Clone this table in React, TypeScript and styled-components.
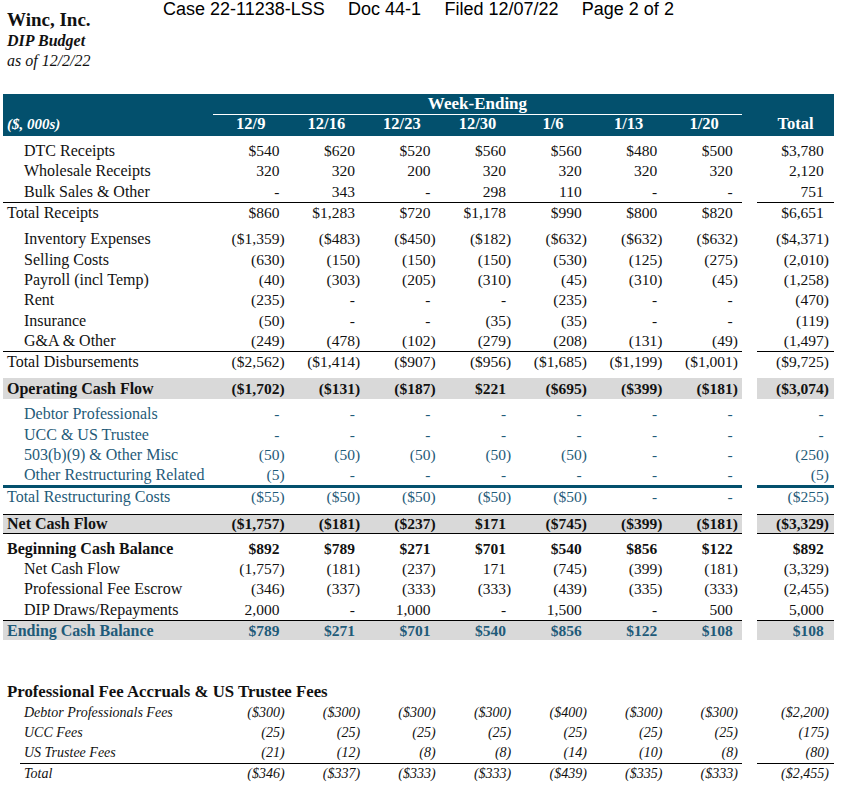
import React from 'react';
import styled, { createGlobalStyle, css } from 'styled-components';

const TEAL = '#03506d';
const TEXT_TEAL = '#1f5b79';
const GRAY = '#d9d9d9';
const COLS = '210px repeat(7, 75.57px) 15px 77px';

const GlobalStyle = createGlobalStyle`
  html, body { margin: 0; padding: 0; background: #fff; }
  body { font-family: "Liberation Serif", "Times New Roman", serif; color: #111; }
`;

const Page = styled.div`
  position: relative;
  width: 850px;
  height: 799px;
  overflow: hidden;
`;

const Stamp = styled.div`
  position: absolute;
  top: -1px;
  left: 163px;
  display: flex;
  gap: 23.3px;
  font-family: "Liberation Sans", Arial, sans-serif;
  font-size: 18px;
  line-height: 20px;
  color: #000;
  white-space: nowrap;
`;

const TitleBlock = styled.div`
  padding: 9px 0 0 7px;
`;
const Company = styled.div`
  font-weight: 700;
  font-size: 19px;
  line-height: 22px;
`;
const Subtitle = styled.div`
  font-weight: 700;
  font-style: italic;
  font-size: 16px;
  line-height: 20px;
`;
const AsOf = styled.div`
  font-style: italic;
  font-size: 16px;
  line-height: 20px;
`;

const Table = styled.div`
  margin: 23px 0 0 3px;
  width: 831px;
`;

const HeaderBand = styled.div`
  background: ${TEAL};
  color: #fff;
  height: 42px;
  display: grid;
  grid-template-columns: ${COLS};
  grid-template-rows: 21px 21px;
  font-weight: 700;
`;

const WeekEnding = styled.div`
  grid-column: 2 / 9;
  grid-row: 1;
  text-align: center;
  border-bottom: 1px solid #fff;
  font-size: 17px;
  line-height: 20px;
`;

const UnitsLabel = styled.div`
  grid-column: 1;
  grid-row: 2;
  padding-left: 4px;
  font-style: italic;
  font-size: 15px;
  line-height: 18px;
`;

const ColHead = styled.div<{ $col: number }>`
  grid-column: ${(p) => p.$col};
  grid-row: 2;
  text-align: center;
  font-size: 16.5px;
  line-height: 18px;
`;

type Tone = 'plain' | 'teal';

const Label = styled.div<{ $indent?: boolean; $bold?: boolean; $italic?: boolean; $tone?: Tone; $inset?: boolean }>`
  display: flex;
  align-items: center;
  box-sizing: border-box;
  white-space: nowrap;
  padding-left: ${(p) => (p.$inset ? '4px' : p.$indent ? '21px' : '4px')};
  margin-left: ${(p) => (p.$inset ? '17px' : '0')};
  font-size: ${(p) => (p.$italic ? '14px' : '16px')};
  font-weight: ${(p) => (p.$bold ? 700 : 400)};
  font-style: ${(p) => (p.$italic ? 'italic' : 'normal')};
  color: ${(p) => (p.$tone === 'teal' ? TEXT_TEAL : '#111')};
`;

const NumCell = styled.div<{ $bold?: boolean; $italic?: boolean; $tone?: Tone; $total?: boolean }>`
  display: flex;
  align-items: center;
  justify-content: flex-end;
  box-sizing: border-box;
  white-space: nowrap;
  padding-right: ${(p) => (p.$total ? '5px' : '4px')};
  font-size: ${(p) => (p.$italic ? '14px' : '15.5px')};
  font-weight: ${(p) => (p.$bold ? 700 : 400)};
  font-style: ${(p) => (p.$italic ? 'italic' : 'normal')};
  color: ${(p) => (p.$tone === 'teal' ? TEXT_TEAL : '#111')};
`;

const Ghost = styled.span`
  visibility: hidden;
`;

const Gap = styled.div``;

type LineKind = 'thin' | 'thick';

const Row = styled.div<{ $mt?: number; $h?: number; $band?: boolean; $line?: LineKind; $lineBottom?: boolean }>`
  display: grid;
  grid-template-columns: ${COLS};
  height: ${(p) => p.$h ?? 20.3}px;
  margin-top: ${(p) => p.$mt ?? 0}px;

  & > ${Label}, & > ${NumCell} {
    ${(p) => p.$band && css`background: ${GRAY};`}
    ${(p) => p.$line === 'thin' && css`border-top: 1px solid #000;`}
    ${(p) => p.$line === 'thick' && css`border-top: 3px solid ${TEAL};`}
    ${(p) => p.$lineBottom && css`border-bottom: 1px solid #000;`}
  }
`;

const SectionTitle = styled.div<{ $mt: number }>`
  margin-top: ${(p) => p.$mt}px;
  padding-left: 4px;
  height: 20.3px;
  display: flex;
  align-items: center;
  font-weight: 700;
  font-size: 16.8px;
  white-space: nowrap;
`;

type RowDef = {
  label: string;
  values: string[];
  total: string;
  indent?: boolean;
  bold?: boolean;
  italic?: boolean;
  tone?: Tone;
  band?: boolean;
  line?: LineKind;
  lineBottom?: boolean;
  mt?: number;
  h?: number;
  inset?: boolean;
};

const Value: React.FC<{ v: string }> = ({ v }) =>
  v.endsWith(')') ? <>{v}</> : (
    <>
      {v}
      <Ghost>)</Ghost>
    </>
  );

const DataRow: React.FC<{ r: RowDef }> = ({ r }) => (
  <Row $mt={r.mt} $h={r.h} $band={r.band} $line={r.line} $lineBottom={r.lineBottom}>
    <Label $indent={r.indent} $bold={r.bold} $italic={r.italic} $tone={r.tone} $inset={r.inset}>
      {r.label}
    </Label>
    {r.values.map((v, i) => (
      <NumCell key={i} $bold={r.bold} $italic={r.italic} $tone={r.tone}>
        <Value v={v} />
      </NumCell>
    ))}
    <Gap />
    <NumCell $total $bold={r.bold} $italic={r.italic} $tone={r.tone}>
      <Value v={r.total} />
    </NumCell>
  </Row>
);

const WEEKS = ['12/9', '12/16', '12/23', '12/30', '1/6', '1/13', '1/20'];

const ROWS: RowDef[] = [
  { label: 'DTC Receipts', indent: true, mt: 5, values: ['$540', '$620', '$520', '$560', '$560', '$480', '$500'], total: '$3,780' },
  { label: 'Wholesale Receipts', indent: true, values: ['320', '320', '200', '320', '320', '320', '320'], total: '2,120' },
  { label: 'Bulk Sales & Other', indent: true, values: ['-', '343', '-', '298', '110', '-', '-'], total: '751' },
  { label: 'Total Receipts', line: 'thin', values: ['$860', '$1,283', '$720', '$1,178', '$990', '$800', '$820'], total: '$6,651' },

  { label: 'Inventory Expenses', indent: true, mt: 7, values: ['($1,359)', '($483)', '($450)', '($182)', '($632)', '($632)', '($632)'], total: '($4,371)' },
  { label: 'Selling Costs', indent: true, values: ['(630)', '(150)', '(150)', '(150)', '(530)', '(125)', '(275)'], total: '(2,010)' },
  { label: 'Payroll (incl Temp)', indent: true, values: ['(40)', '(303)', '(205)', '(310)', '(45)', '(310)', '(45)'], total: '(1,258)' },
  { label: 'Rent', indent: true, values: ['(235)', '-', '-', '-', '(235)', '-', '-'], total: '(470)' },
  { label: 'Insurance', indent: true, values: ['(50)', '-', '-', '(35)', '(35)', '-', '-'], total: '(119)' },
  { label: 'G&A & Other', indent: true, values: ['(249)', '(478)', '(102)', '(279)', '(208)', '(131)', '(49)'], total: '(1,497)' },
  { label: 'Total Disbursements', line: 'thin', values: ['($2,562)', '($1,414)', '($907)', '($956)', '($1,685)', '($1,199)', '($1,001)'], total: '($9,725)' },

  { label: 'Operating Cash Flow', bold: true, band: true, mt: 7, h: 21, values: ['($1,702)', '($131)', '($187)', '$221', '($695)', '($399)', '($181)'], total: '($3,074)' },

  { label: 'Debtor Professionals', indent: true, tone: 'teal', mt: 5, values: ['-', '-', '-', '-', '-', '-', '-'], total: '-' },
  { label: 'UCC & US Trustee', indent: true, tone: 'teal', values: ['-', '-', '-', '-', '-', '-', '-'], total: '-' },
  { label: '503(b)(9) & Other Misc', indent: true, tone: 'teal', values: ['(50)', '(50)', '(50)', '(50)', '(50)', '-', '-'], total: '(250)' },
  { label: 'Other Restructuring Related', indent: true, tone: 'teal', values: ['(5)', '-', '-', '-', '-', '-', '-'], total: '(5)' },
  { label: 'Total Restructuring Costs', tone: 'teal', line: 'thick', values: ['($55)', '($50)', '($50)', '($50)', '($50)', '-', '-'], total: '($255)' },

  { label: 'Net Cash Flow', bold: true, band: true, line: 'thin', lineBottom: true, mt: 8, h: 19, values: ['($1,757)', '($181)', '($237)', '$171', '($745)', '($399)', '($181)'], total: '($3,329)' },

  { label: 'Beginning Cash Balance', bold: true, mt: 6, values: ['$892', '$789', '$271', '$701', '$540', '$856', '$122'], total: '$892' },
  { label: 'Net Cash Flow', indent: true, values: ['(1,757)', '(181)', '(237)', '171', '(745)', '(399)', '(181)'], total: '(3,329)' },
  { label: 'Professional Fee Escrow', indent: true, values: ['(346)', '(337)', '(333)', '(333)', '(439)', '(335)', '(333)'], total: '(2,455)' },
  { label: 'DIP Draws/Repayments', indent: true, values: ['2,000', '-', '1,000', '-', '1,500', '-', '500'], total: '5,000' },
  { label: 'Ending Cash Balance', bold: true, tone: 'teal', band: true, line: 'thin', values: ['$789', '$271', '$701', '$540', '$856', '$122', '$108'], total: '$108' },
];

const FEE_ROWS: RowDef[] = [
  { label: 'Debtor Professionals Fees', indent: true, italic: true, values: ['($300)', '($300)', '($300)', '($300)', '($400)', '($300)', '($300)'], total: '($2,200)' },
  { label: 'UCC Fees', indent: true, italic: true, values: ['(25)', '(25)', '(25)', '(25)', '(25)', '(25)', '(25)'], total: '(175)' },
  { label: 'US Trustee Fees', indent: true, italic: true, values: ['(21)', '(12)', '(8)', '(8)', '(14)', '(10)', '(8)'], total: '(80)' },
  { label: 'Total', italic: true, inset: true, line: 'thin', values: ['($346)', '($337)', '($333)', '($333)', '($439)', '($335)', '($333)'], total: '($2,455)' },
];

export default function App() {
  return (
    <Page>
      <GlobalStyle />
      <Stamp>
        <span>Case 22-11238-LSS</span>
        <span>Doc 44-1</span>
        <span>Filed 12/07/22</span>
        <span>Page 2 of 2</span>
      </Stamp>
      <TitleBlock>
        <Company>Winc, Inc.</Company>
        <Subtitle>DIP Budget</Subtitle>
        <AsOf>as of 12/2/22</AsOf>
      </TitleBlock>
      <Table>
        <HeaderBand>
          <WeekEnding>Week-Ending</WeekEnding>
          <UnitsLabel>($, 000s)</UnitsLabel>
          {WEEKS.map((w, i) => (
            <ColHead key={w} $col={i + 2}>
              {w}
            </ColHead>
          ))}
          <ColHead $col={10}>Total</ColHead>
        </HeaderBand>
        {ROWS.map((r, i) => (
          <DataRow key={i} r={r} />
        ))}
        <SectionTitle $mt={42}>Professional Fee Accruals &amp; US Trustee Fees</SectionTitle>
        {FEE_ROWS.map((r, i) => (
          <DataRow key={i} r={r} />
        ))}
      </Table>
    </Page>
  );
}
